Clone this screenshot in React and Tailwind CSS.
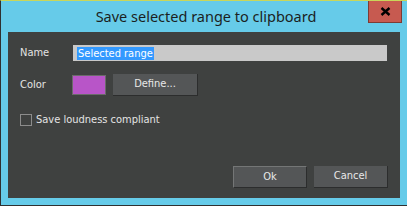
export default function App() {
  const ui = { fontFamily: '"DejaVu Sans Condensed", "Liberation Sans", Arial, sans-serif' }

  return (
    <div className="relative w-[407px] h-[206px] bg-[#66cbe9] border-t border-t-[#c9d65a] border-l border-l-[#2f3030] border-b border-b-[#2f3030] flex flex-col overflow-hidden">
      {/* Title bar */}
      <div className="h-[31px] flex items-center justify-center pl-[4px]">
        <span className="text-[14.5px] text-[#1b1f22]" style={{ fontFamily: '"Noto Sans", "Open Sans", sans-serif' }}>
          Save selected range to clipboard
        </span>
      </div>
      <div className="absolute top-0 left-[367px] w-[34px] h-[22px] bg-[#c75a50] border border-[#7d3b34] border-t-0 flex items-center justify-center">
        <svg width="11" height="9" viewBox="0 0 11 9">
          <path d="M1.5 1 L9.5 8 M9.5 1 L1.5 8" stroke="#000" strokeWidth="2.4" />
        </svg>
      </div>

      {/* Client area */}
      <div className="ml-[7px] w-[392px] h-[166px] bg-[#3f4140] flex flex-col pl-[12px] pr-[12px] pt-[13px] pb-[10px] text-[11px] text-[#e4e4e4]" style={ui}>
        <div className="flex items-center h-[16px]">
          <span className="w-[53px]">Name</span>
          <div className="w-[314px] h-[16px] bg-[#c9c9c9] flex items-center pl-[4px]">
            <span className="bg-[#3399ff] text-white leading-[13px] px-[1px]">Selected range</span>
          </div>
        </div>

        <div className="flex items-center h-[22px] mt-[13px]">
          <span className="w-[52px]">Color</span>
          <div className="w-[34px] h-[20px] bg-[#b855c8] border border-[#6b6b6b]" />
          <button className="ml-[7px] w-[85px] h-[22px] bg-[#545657] border-r border-b border-[#2c2d2d] text-[#e8e8e8]">
            Define...
          </button>
        </div>

        <label className="flex items-center mt-[18px] h-[12px]">
          <span className="w-[12px] h-[12px] border border-[#8c8c8c]" />
          <span className="ml-[4px]">Save loudness compliant</span>
        </label>

        <div className="mt-auto flex justify-end gap-[7px]">
          <button className="w-[74px] h-[22px] bg-[#545657] border border-[#747676] border-r-[#2c2d2d] border-b-[#2c2d2d] text-[#e8e8e8]">
            Ok
          </button>
          <button className="w-[74px] h-[22px] bg-[#545657] border-r border-b border-[#2c2d2d] text-[#e8e8e8]">
            Cancel
          </button>
        </div>
      </div>
    </div>
  )
}
